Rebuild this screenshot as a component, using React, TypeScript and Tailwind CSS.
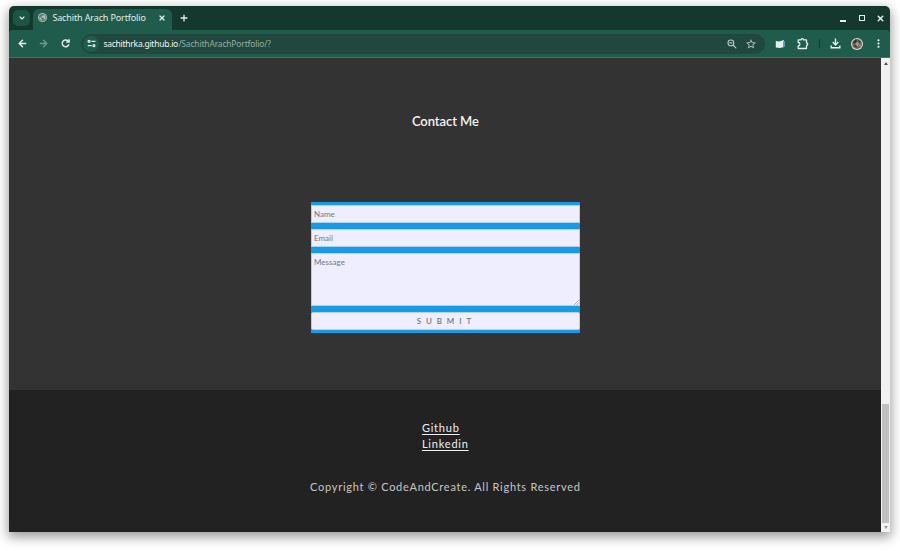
import React from "react";
import { ArrowLeft, ArrowRight, ChevronDown, Plus, X } from "lucide-react";
import { MdPublic, MdStarOutline, MdMoreVert } from "react-icons/md";

function TabStrip() {
  return (
    <div className="flex h-6 shrink-0 items-end bg-[#14382d] text-[#e3eee9]">
      <div className="mb-[4px] ml-[4px] flex h-[16px] w-[17px] items-center justify-center rounded-[5px] bg-[#1d5545]">
        <ChevronDown size={8} strokeWidth={3.4} />
      </div>
      <div className="ml-[3px] flex h-[21px] w-[139px] items-center rounded-t-[6px] bg-[#1f5c4b] pb-[4px] pl-[5px]">
        <span className="flex size-[9px] shrink-0 items-center justify-center rounded-full bg-[#b4c3be]">
          <MdPublic className="size-[9px] shrink-0 text-[#5e7d73]" />
        </span>
        <span className="ml-[5px] w-[95px] whitespace-nowrap font-['Noto_Sans',sans-serif] text-[9px] leading-[12px] tracking-[-0.13px]">
          Sachith Arach Portfolio
        </span>
        <X className="ml-[11px]" size={8} strokeWidth={3.6} />
      </div>
      <Plus className="mb-[7px] ml-[7px]" size={10} strokeWidth={3.2} />
      <div className="mr-[5px] ml-auto flex h-6 items-center gap-[13px]">
        <i className="mt-[5px] h-[2px] w-[6px] bg-[#e3eee9]" />
        <i className="size-[6px] border-[1.5px] border-[#e3eee9]" />
        <X className="-ml-[2px]" size={9} strokeWidth={4} />
      </div>
    </div>
  );
}

function SiteControls() {
  return (
    <span className="flex size-[16px] items-center justify-center rounded-full bg-[#1f5c4b]">
      <svg width="9" height="9" viewBox="0 0 10 10" fill="none" stroke="#dce9e4" strokeWidth="1.4">
        <path d="M4.8 2.6H9.4M.8 7.4h4.4" />
        <circle cx="2.3" cy="2.6" r="1.1" />
        <circle cx="7.7" cy="7.4" r="1.1" />
      </svg>
    </span>
  );
}

function Toolbar() {
  return (
    <div className="shrink-0 bg-[#14382d]">
      <div className="flex h-[28px] items-center rounded-t-[4px] border-b border-[#3b7767] bg-[#1f5c4b] text-[#e3eee9]">
        <ArrowLeft className="ml-[8px]" size={11} strokeWidth={3.2} />
        <ArrowRight className="ml-[10px] text-[#709b8e]" size={11} strokeWidth={2.8} />
        <svg className="ml-[11px]" width="11" height="11" viewBox="0 0 11 11" fill="none" stroke="#e3eee9" strokeWidth="1.5">
          <path d="M8.9 6.3A3.4 3.4 0 1 1 8 2.9l.9.9" />
          <path d="M9.1 1.2v2.9H6.2" />
        </svg>
        <div className="ml-[10px] flex h-[20px] w-[684px] items-center rounded-full bg-[#20483e] pl-[2px] font-['Noto_Sans',sans-serif] text-[8.5px] leading-[12px]">
          <SiteControls />
          <span className="ml-[4px] w-[75px] whitespace-nowrap tracking-[-0.25px] text-[#f1f7f4]">sachithrka.github.io</span>
          <span className="whitespace-nowrap tracking-[-0.18px] text-[#94aca4]">/SachithArachPortfolio/?</span>
          <svg className="mr-[8px] ml-auto" width="10" height="10" viewBox="0 0 10 10" fill="none" stroke="#b7c9c2" strokeWidth="1.1">
            <circle cx="3.9" cy="3.9" r="2.9" />
            <path d="M6 6l3.3 3.3M2.5 3.9h2.8" />
          </svg>
          <MdStarOutline className="mr-[8px] size-[12px] text-[#b7c9c2]" />
        </div>
        <svg className="ml-[10px]" width="11" height="10" viewBox="0 0 11 10">
          <path d="M.8 2l3.6.4L9 1v7L5 9 .8 8.4z" fill="#e5eeec" />
          <path d="M8 2l2 .4v5L8 8.4z" fill="#5d9fc0" />
        </svg>
        <svg className="ml-[11px]" width="12" height="12" viewBox="0 0 12 12">
          <path
            d="M1.2 1.9h2.9a1.2 1.2 0 0 1 2.4 0h3v3a1.2 1.2 0 0 1 0 2.4v3.2H1.2V7.9a1.7 1.7 0 0 0 0-3.4z"
            fill="none"
            stroke="#e3eee9"
            strokeWidth="1.3"
            strokeLinejoin="round"
          />
        </svg>
        <i className="ml-[10px] h-[9px] w-px bg-[#153c30]" />
        <svg className="ml-[10px]" width="11" height="11" viewBox="0 0 11 11" fill="none" stroke="#e3eee9" strokeWidth="1.4">
          <path d="M5.5.5v6.2M2.7 4.1l2.8 2.8 2.8-2.8M1.2 7.5v2.3h8.6V7.5" />
        </svg>
        <svg className="ml-[10px]" width="12" height="12" viewBox="0 0 12 12">
          <circle cx="6" cy="6" r="6" fill="#d7ddda" />
          <circle cx="6" cy="6" r="4.9" fill="#75665d" />
          <path d="M2 4l3-3 1 2-3 3zM7 2l3 2-2 1zM3 8l2-1 1 3z" fill="#3c302d" />
          <path d="M6 4l2 1-1 3-2-1zM8 7h2L9 9z" fill="#bba396" />
        </svg>
        <MdMoreVert className="ml-[9px] size-[13px]" />
      </div>
    </div>
  );
}

const fieldClass =
  "block w-full resize-none rounded-none border border-[#a9d3f4] bg-[#eeeeff] px-[2px] text-[8px] leading-[12px] tracking-[0.05px] placeholder:text-[#77777f] outline-none";

function ContactForm() {
  return (
    <form className="mt-[71px] flex h-[131px] w-[269px] flex-col bg-[#1c99e3] pt-[3px]">
      <input className={`${fieldClass} h-[18px] shrink-0`} placeholder="Name" />
      <input className={`${fieldClass} mt-[6px] h-[18px] shrink-0`} placeholder="Email" />
      <div className="relative mt-[6px] h-[53px] shrink-0">
        <textarea className={`${fieldClass} h-[53px] pt-[2px]`} placeholder="Message" />
        <svg className="absolute right-[1px] bottom-[1px]" width="5" height="5" viewBox="0 0 5 5" stroke="#8c8c94" strokeWidth=".7">
          <path d="M0 5L5 0M2.5 5L5 2.5" />
        </svg>
      </div>
      <button type="button" className="mt-[6px] h-[18px] shrink-0 rounded-[2px] border border-[#a9d3f4] bg-[#eeeeff] pl-[2px] text-[8px] leading-[12px] font-medium tracking-[4.9px] text-[#6d6d77]">
        SUBMIT
      </button>
    </form>
  );
}

function ScrollBar() {
  return (
    <div className="flex w-[9px] shrink-0 flex-col items-center bg-[#f1f1f1]">
      <i className="mt-[4px] border-x-[2.5px] border-b-[3px] border-x-transparent border-b-[#505050]" />
      <i className="mt-auto h-[119px] w-[7px] bg-[#c1c1c1]" />
      <i className="mt-[3px] mb-[3px] border-x-[2.5px] border-t-[3px] border-x-transparent border-t-[#9a9a9a]" />
    </div>
  );
}

export default function App() {
  return (
    <div className="h-[551px] w-[900px] overflow-hidden bg-white pt-[6px] pl-[9.4px]">
      <div className="flex h-[526px] w-[881px] flex-col overflow-hidden rounded-t-[5px] shadow-[0_4px_12px_1px_rgba(0,0,0,0.4)]">
        <TabStrip />
        <Toolbar />
        <div className="flex min-h-0 flex-1 font-['Lato',sans-serif]">
          <main className="flex min-w-0 flex-1 flex-col bg-[#222]">
            <section className="flex h-[332px] shrink-0 flex-col items-center bg-[#333] pt-[53px]">
              <h1 className="h-[20px] text-[13px] leading-[20px] font-semibold tracking-[-0.05px] whitespace-nowrap text-[#f4f4f4]">Contact Me</h1>
              <ContactForm />
            </section>
            <footer className="flex flex-col items-center pt-[30px] text-[11px] leading-[16px] text-[#f0f0f0]">
              <nav className="flex w-[47px] flex-col items-start tracking-[0.8px]">
                <a className="underline underline-offset-[1.5px]">Github</a>
                <a className="underline underline-offset-[1.5px]">Linkedin</a>
              </nav>
              <p className="mt-[27px] tracking-[0.73px] whitespace-nowrap text-[#c6c6c6]">Copyright © CodeAndCreate. All Rights Reserved</p>
            </footer>
          </main>
          <ScrollBar />
        </div>
      </div>
    </div>
  );
}
